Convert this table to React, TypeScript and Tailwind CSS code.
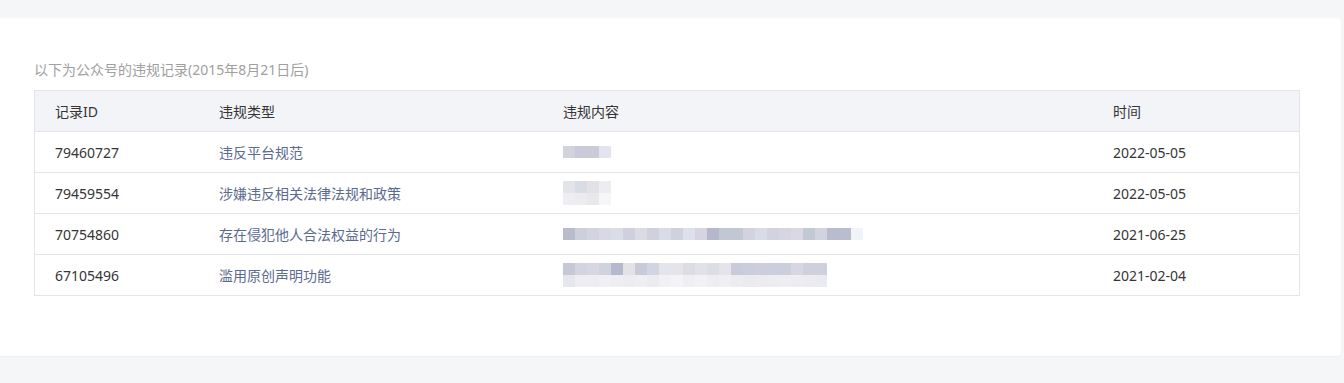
const rows = [
  {
    id: '79460727',
    type: '违反平台规范',
    date: '2022-05-05',
    blur: [['#d3d3de', '#c8cad9', '#cbcad7', '#e2e4ef']],
  },
  {
    id: '79459554',
    type: '涉嫌违反相关法律法规和政策',
    date: '2022-05-05',
    blur: [
      ['#e3e3ea', '#d9dbe5', '#e2e1e8', '#ececf1'],
      ['#eeeef2', '#ebebf0', '#e7e7ec', '#f6f6f8'],
    ],
  },
  {
    id: '70754860',
    type: '存在侵犯他人合法权益的行为',
    date: '2021-06-25',
    blur: [
      [
        '#b9bccc', '#cdd0dc', '#d2d4df', '#d9d9e3', '#dadce6', '#cfd0dd', '#dbdbe4', '#d0d1dd',
        '#d9dce5', '#cfd2dc', '#dde1ea', '#d5d4e0', '#b5b8cb', '#c3c7d5', '#c3c7d4', '#d2d3df',
        '#d9dce6', '#d1d3df', '#d6d6e0', '#dad8e2', '#c2c8d6', '#d1d3de', '#b9bccd', '#babdce',
        '#f0f3f8',
      ],
    ],
  },
  {
    id: '67105496',
    type: '滥用原创声明功能',
    date: '2021-02-04',
    blur: [
      [
        '#c5c8d5', '#d2d4df', '#d8d7e1', '#d0d2dd', '#b5b9cd', '#e3e2e7', '#c9cad8', '#d1d5e0',
        '#e4e5eb', '#e5e4e9', '#dbdde5', '#e2e1e8', '#dcdee6', '#e5e4ea', '#c9ccd8', '#cacedb',
        '#cccfdb', '#cbcfdb', '#cbcfdb', '#d6d7e0', '#ced0dc', '#ced1dd',
      ],
      [
        '#e6e7ed', '#ededf2', '#eeedf2', '#f0f0f4', '#eeeef2', '#ececf1', '#eeeef3', '#ebebf0',
        '#f1f1f4', '#f4f4f6', '#efeff3', '#f2f2f5', '#eeeef2', '#f0f0f4', '#ececf1', '#eaeaef',
        '#ebebf0', '#ececf1', '#eeeef2', '#ededf1', '#ebebf0', '#eaebf0',
      ],
    ],
  },
];

function Blurred({ lines }: { lines: string[][] }) {
  return (
    <div className="flex flex-col">
      {lines.map((line, i) => (
        <div key={i} className="flex">
          {line.map((c, j) => (
            <div key={j} className="w-[12px] h-[12px]" style={{ backgroundColor: c }} />
          ))}
        </div>
      ))}
    </div>
  );
}

export default function App() {
  const cols = 'grid grid-cols-[164px_344px_550px_1fr]';
  return (
    <div
      className="min-h-[383px] bg-[#f5f6f7] pt-[18px] pb-[27px] text-[14px]"
      style={{ fontFamily: '"Noto Sans", "Noto Sans CJK SC", sans-serif' }}
    >
      <div className="mr-[3px] h-[338px] rounded-r-[4px] bg-white pl-[34px] pr-[41px] pt-[42px] shadow-[0_1px_2px_rgba(0,0,0,0.04)]">
        <p className="mb-[10px] leading-[20px] text-[#a0a0a0]">以下为公众号的违规记录(2015年8月21日后)</p>
        <div className="border border-[#e4e5ea]">
          <div className={`${cols} h-[41px] items-center border-b border-[#e4e5ea] bg-[#f3f4f7] text-[#353535]`}>
            <div className="pl-5">记录ID</div>
            <div className="pl-5">违规类型</div>
            <div className="pl-5">违规内容</div>
            <div className="pl-5">时间</div>
          </div>
          {rows.map((r, i) => (
            <div
              key={r.id}
              className={`${cols} items-center ${i < rows.length - 1 ? 'h-[41px] border-b border-[#e4e5ea]' : 'h-[40px]'}`}
            >
              <div className="pl-5 text-[#353535]">{r.id}</div>
              <div className="pl-5 text-[#5b6a8f]">{r.type}</div>
              <div className="pl-5">
                <Blurred lines={r.blur} />
              </div>
              <div className="pl-5 text-[#353535]">{r.date}</div>
            </div>
          ))}
        </div>
      </div>
    </div>
  );
}
